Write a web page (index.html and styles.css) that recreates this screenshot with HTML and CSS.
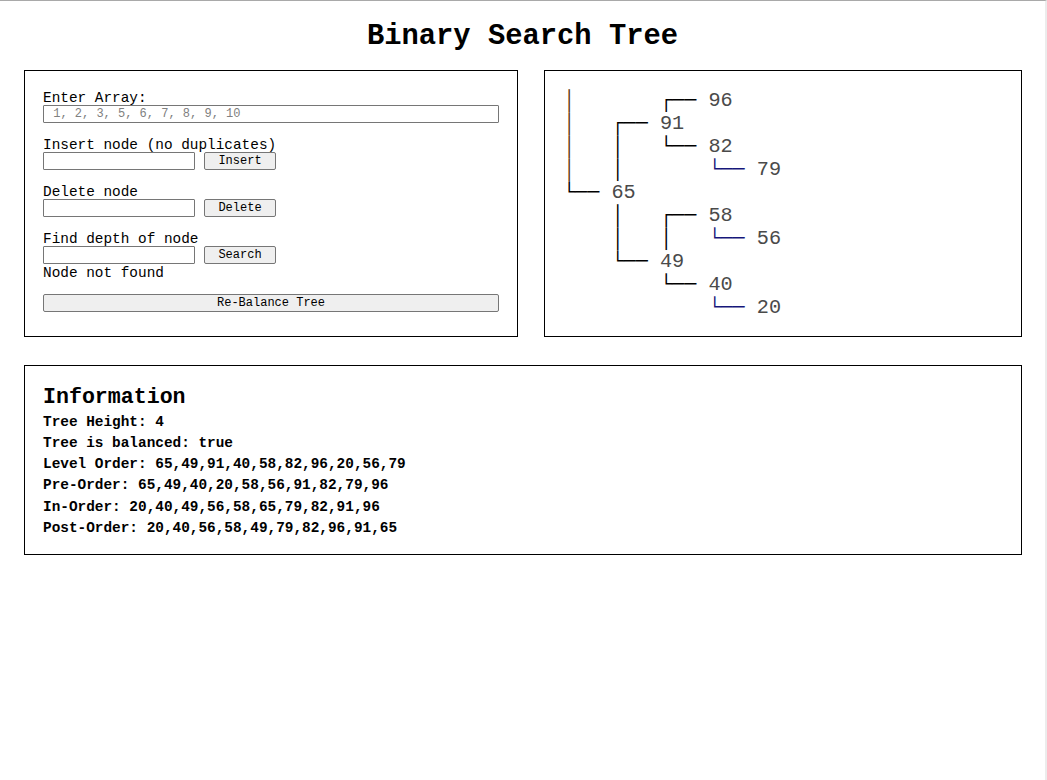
FILE: index.html
```html
<!DOCTYPE html>
<html lang="en">
<head>
<meta charset="utf-8">
<title>Binary Search Tree</title>
<link rel="stylesheet" href="styles.css">
</head>
<body>
<h1 class="title">Binary Search Tree</h1>
<main class="container">
  <div class="top-row">
    <section class="panel controls">
      <div class="group first">
        <label class="field-label" for="arr">Enter Array:</label>
        <input id="arr" class="input wide" type="text" placeholder=" 1, 2, 3, 5, 6, 7, 8, 9, 10">
      </div>
      <div class="group">
        <label class="field-label" for="ins">Insert node (no duplicates)</label>
        <div class="row">
          <input id="ins" class="input short" type="text">
          <button class="btn small" type="button">Insert</button>
        </div>
      </div>
      <div class="group">
        <label class="field-label" for="del">Delete node</label>
        <div class="row">
          <input id="del" class="input short" type="text">
          <button class="btn small" type="button">Delete</button>
        </div>
      </div>
      <div class="group">
        <label class="field-label" for="find">Find depth of node</label>
        <div class="row">
          <input id="find" class="input short" type="text">
          <button class="btn small" type="button">Search</button>
        </div>
        <div class="result">Node not found</div>
      </div>
      <button class="btn wide rebalance" type="button">Re-Balance Tree</button>
    </section>
    <section class="panel tree-panel">
<pre class="tree"><span class="c0">│</span>       ┌── <span class="n">96</span>
<span class="c0">│</span>   ┌── <span class="n">91</span>
<span class="c0">│</span>   │   └── <span class="n">82</span>
<span class="c0">│</span>   │       <span class="cb">└──</span> <span class="n">79</span>
└── <span class="n">65</span>
    │   ┌── <span class="n">58</span>
    │   │   <span class="cb">└──</span> <span class="n">56</span>
    └── <span class="n">49</span>
        └── <span class="n">40</span>
            <span class="cb">└──</span> <span class="n">20</span></pre>
    </section>
  </div>
  <section class="panel info">
    <h2 class="info-title">Information</h2>
    <div class="info-line">Tree Height: 4</div>
    <div class="info-line">Tree is balanced: true</div>
    <div class="info-line">Level Order: 65,49,91,40,58,82,96,20,56,79</div>
    <div class="info-line">Pre-Order: 65,49,40,20,58,56,91,82,79,96</div>
    <div class="info-line">In-Order: 20,40,49,56,58,65,79,82,91,96</div>
    <div class="info-line">Post-Order: 20,40,56,58,49,79,82,96,91,65</div>
  </section>
</main>
</body>
</html>
```

FILE: styles.css
```css
html {
  height: 100%;
  box-sizing: border-box;
  border-top: 1px solid #a9a9a9;
  border-right: 2px solid #ececec;
  background: #ffffff;
}

body {
  margin: 0;
  font-family: "Liberation Mono", "Courier New", monospace;
  color: #000000;
}

.title {
  margin: 0;
  padding-top: 19px;
  font-size: 28.8px;
  line-height: 33px;
  font-weight: bold;
  text-align: center;
}

.container {
  width: 998px;
  margin: 17px 0 0 24px;
  display: flex;
  flex-direction: column;
  gap: 28px;
}

.top-row {
  display: grid;
  grid-template-columns: 494px 478px;
  gap: 26px;
  height: 267px;
}

.panel {
  box-sizing: border-box;
  border: 1px solid #000000;
  background: #ffffff;
}

.controls {
  padding: 19px 18px 18px;
  display: flex;
  flex-direction: column;
}

.group {
  display: flex;
  flex-direction: column;
  margin-top: 14px;
}

.group.first {
  margin-top: 0;
}

.field-label {
  font-size: 14.4px;
  line-height: 15px;
  padding-top: 1px;
  margin-bottom: -1px;
}

.row {
  display: flex;
  gap: 9px;
}

.input {
  box-sizing: border-box;
  height: 18px;
  margin: 0;
  padding: 0 2px;
  border: 1px solid #767676;
  border-radius: 1px;
  font-family: "Liberation Mono", "Courier New", monospace;
  font-size: 12px;
  color: #000000;
  background: #ffffff;
}

.input::placeholder {
  color: #808080;
}

.input.wide {
  width: 456px;
}

.input.short {
  width: 152px;
}

.btn {
  box-sizing: border-box;
  height: 18px;
  margin: 0;
  padding: 0;
  border: 1px solid #767676;
  border-radius: 2px;
  background: #efefef;
  font-family: "Liberation Mono", "Courier New", monospace;
  font-size: 12px;
  line-height: 16px;
  color: #000000;
}

.btn.small {
  width: 72px;
}

.btn.wide {
  width: 456px;
}

.result {
  font-size: 14.4px;
  line-height: 17px;
  padding-top: 1px;
}

.rebalance {
  margin-top: 12px;
}

.tree-panel {
  padding: 18px 18px 17px;
}

.tree {
  margin: 0;
  font-family: "Liberation Mono", "DejaVu Sans Mono", monospace;
  font-size: 20.2px;
  line-height: 23px;
  color: #000000;
}

.tree .n {
  color: #4a4a4a;
}

.tree .c0 {
  color: #5e3a12;
}

.tree .cb {
  color: #16167a;
}

.info {
  height: 190px;
  padding: 19px 18px 15px;
}

.info-title {
  margin: 0 0 2.5px;
  font-size: 21.6px;
  line-height: 24px;
  font-weight: bold;
}

.info-line {
  font-size: 14.4px;
  line-height: 21.3px;
  font-weight: bold;
}
```
